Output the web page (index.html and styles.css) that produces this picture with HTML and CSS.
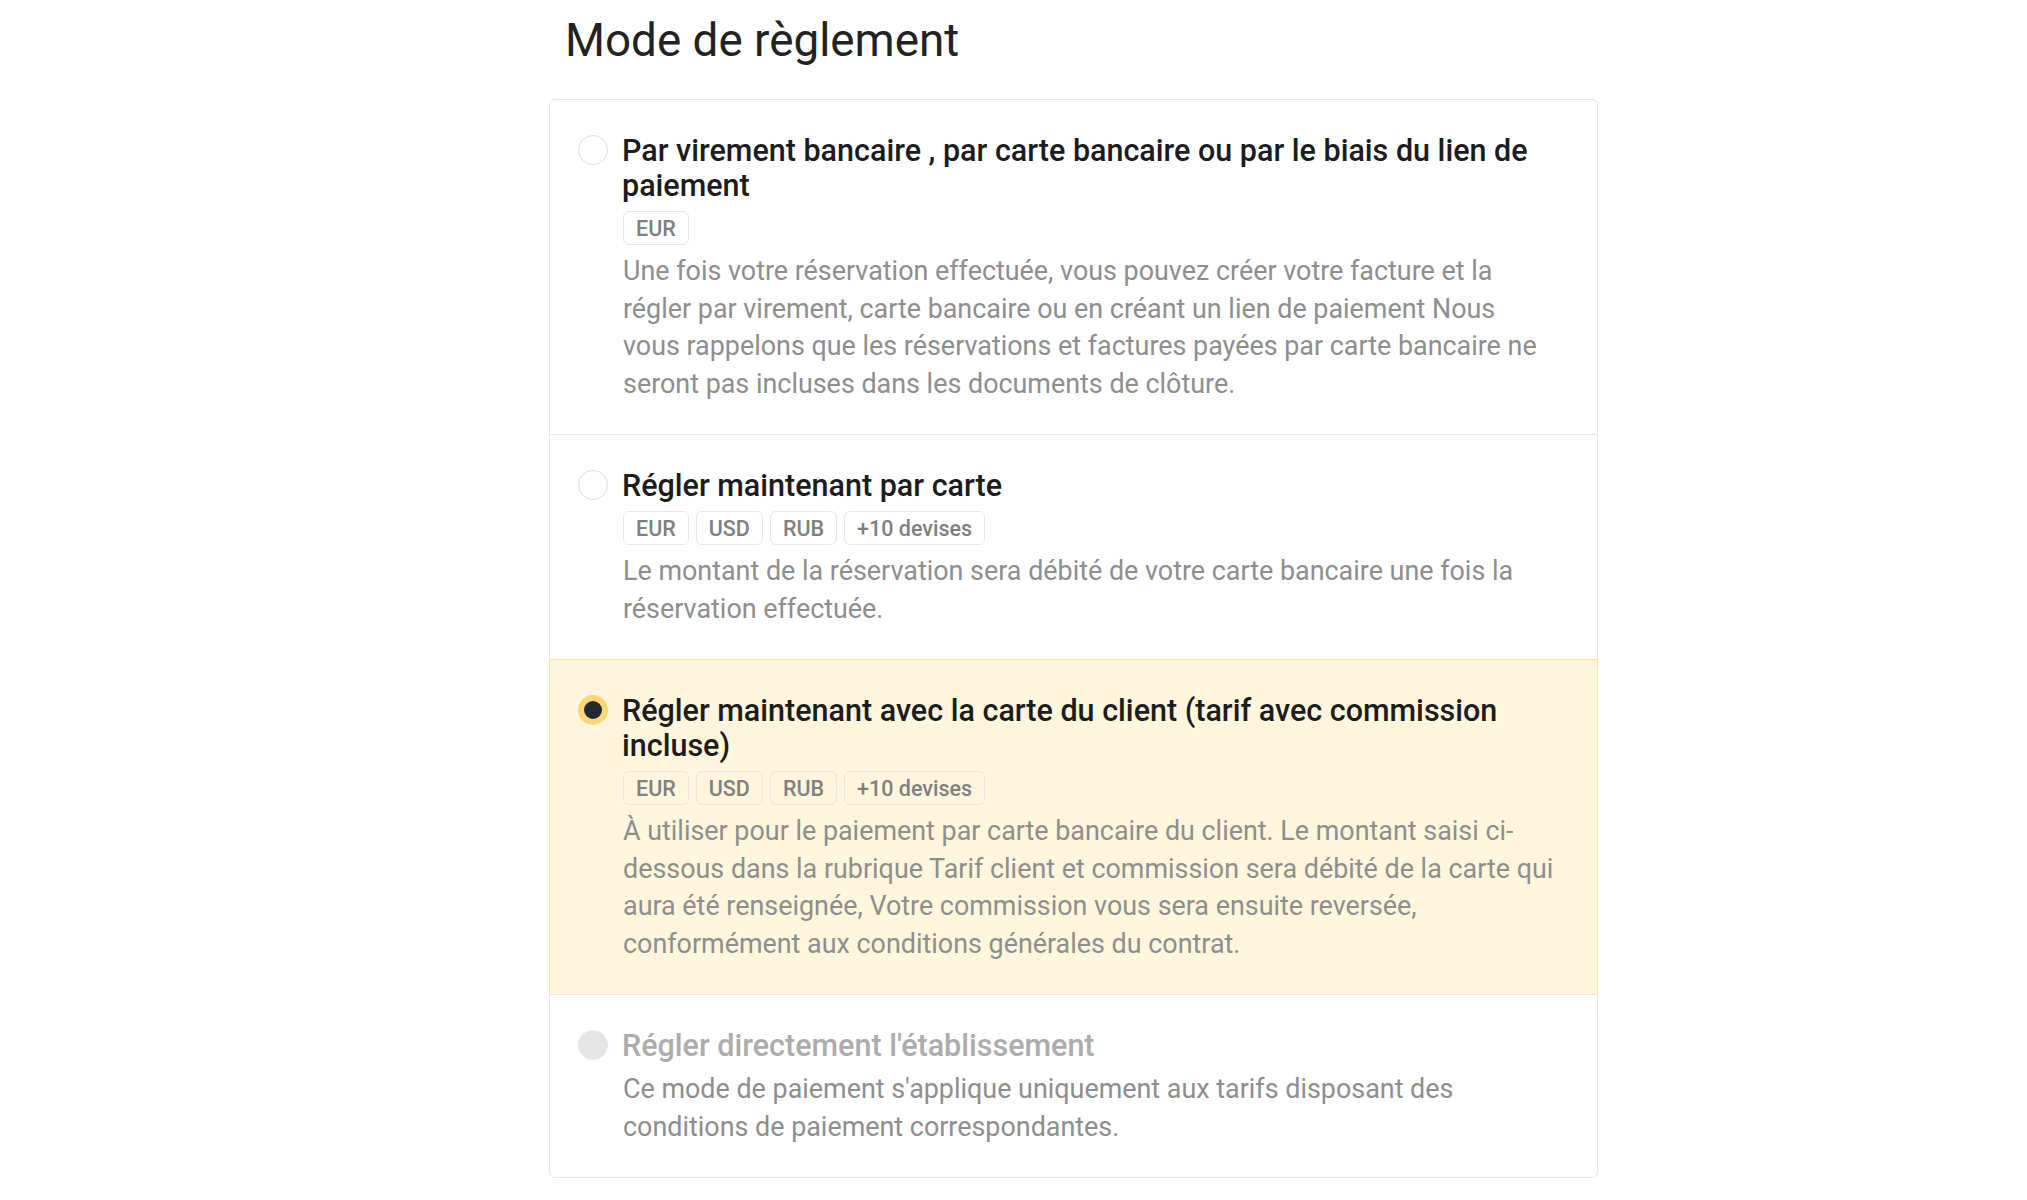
FILE: index.html
```html
<!DOCTYPE html>
<html lang="fr">
<head>
  <meta charset="UTF-8" />
  <meta name="viewport" content="width=device-width, initial-scale=1.0"/>
  <title>Mode de règlement</title>
  <link rel="stylesheet" href="styles.css">
</head>
<body>

  <!-- Payment method -->
  <main class="payment">
    <h2 class="payment-title">Mode de règlement</h2>

    <form class="options">
      <label class="option">
        <input type="radio" name="payment" value="transfer" />
        <div class="option-body">
          <div class="option-name">Par virement bancaire , par carte bancaire ou par le biais du lien de paiement</div>
          <div class="tags">
            <span class="tag">EUR</span>
          </div>
          <p class="option-desc">Une fois votre réservation effectuée, vous pouvez créer votre facture et la régler par virement, carte bancaire ou en créant un lien de paiement Nous vous rappelons que les réservations et factures payées par carte bancaire ne seront pas incluses dans les documents de clôture.</p>
        </div>
      </label>

      <label class="option">
        <input type="radio" name="payment" value="card" />
        <div class="option-body">
          <div class="option-name">Régler maintenant par carte</div>
          <div class="tags">
            <span class="tag">EUR</span>
            <span class="tag">USD</span>
            <span class="tag">RUB</span>
            <span class="tag">+10 devises</span>
          </div>
          <p class="option-desc">Le montant de la réservation sera débité de votre carte bancaire une fois la réservation effectuée.</p>
        </div>
      </label>

      <label class="option is-selected">
        <input type="radio" name="payment" value="client-card" checked />
        <div class="option-body">
          <div class="option-name">Régler maintenant avec la carte du client (tarif avec commission incluse)</div>
          <div class="tags">
            <span class="tag">EUR</span>
            <span class="tag">USD</span>
            <span class="tag">RUB</span>
            <span class="tag">+10 devises</span>
          </div>
          <p class="option-desc">À utiliser pour le paiement par carte bancaire du client. Le montant saisi ci-dessous dans la rubrique Tarif client et commission sera débité de la carte qui aura été renseignée, Votre commission vous sera ensuite reversée, conformément aux conditions générales du contrat.</p>
        </div>
      </label>

      <label class="option is-disabled">
        <input type="radio" name="payment" value="hotel" disabled />
        <div class="option-body">
          <div class="option-name">Régler directement l'établissement</div>
          <p class="option-desc">Ce mode de paiement s'applique uniquement aux tarifs disposant des conditions de paiement correspondantes.</p>
        </div>
      </label>
    </form>
  </main>

</body>
</html>
```

FILE: styles.css
```css
body {
  font-family: Roboto, "Liberation Sans", sans-serif;
  background: #fff;
  color: #1f1f1f;
  margin: 0;
  padding: 0;
}

.payment {
  width: 1049px;
  margin-left: 549px;
  padding-top: 14px;
}

.payment-title {
  font-size: 45.8px;
  font-weight: 400;
  line-height: 54px;
  margin: 0 0 31px 16px;
  color: #222;
}

.options {
  margin: 0;
}

.option {
  display: flex;
  gap: 14px;
  padding: 33px 40px 31px 28px;
  border: 1px solid #e6e6e6;
  margin-top: -1px;
  background: #fff;
  cursor: pointer;
  position: relative;
}

.option:first-child {
  margin-top: 0;
  border-radius: 6px 6px 0 0;
}

.option:last-child {
  border-radius: 0 0 6px 6px;
}

.option input[type="radio"] {
  appearance: none;
  -webkit-appearance: none;
  flex: none;
  width: 30px;
  height: 30px;
  margin: 2px 0 0 0;
  border: 1px solid #dedede;
  border-radius: 50%;
  background: #fff;
  cursor: pointer;
}

.option input[type="radio"]:checked {
  border: 6px solid #fdd777;
  background: #242833;
}

.option input[type="radio"]:disabled {
  border-color: #e5e5e5;
  background: #e5e5e5;
}

.option-body {
  flex: 1;
  min-width: 0;
}

.option-name {
  font-size: 30.5px;
  font-weight: 500;
  line-height: 35px;
  color: #1c1c1e;
  margin-bottom: 8px;
}

.tags {
  display: flex;
  gap: 7px;
  margin-bottom: 8px;
  margin-left: 1px;
}

.tag {
  height: 34px;
  box-sizing: border-box;
  display: inline-flex;
  align-items: center;
  padding: 0 12px;
  border: 1px solid #e6e6e6;
  border-radius: 6px;
  font-size: 21.5px;
  font-weight: 500;
  color: #808080;
}

.option-desc {
  margin: 0 0 0 1px;
  font-size: 26.9px;
  line-height: 37.5px;
  color: #8e8e8e;
}

.option.is-selected {
  background: #fff6dd;
  border-color: #fde3a0;
  border-bottom-color: #e6e6e6;
}

.option.is-disabled {
  cursor: default;
}

.option.is-disabled .option-name {
  color: #acacac;
}
```
